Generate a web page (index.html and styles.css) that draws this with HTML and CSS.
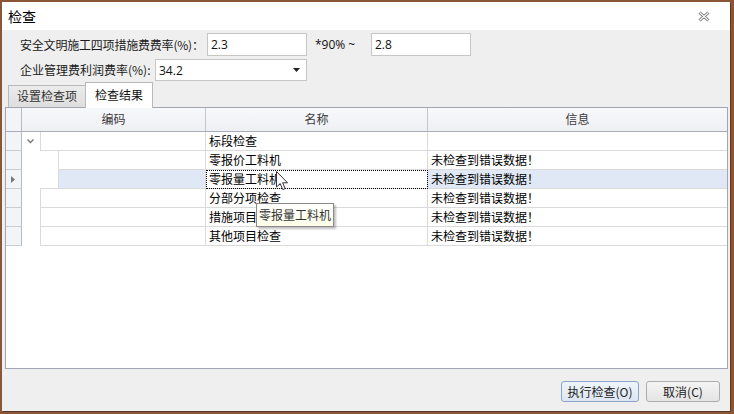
FILE: index.html
```html
<!DOCTYPE html>
<html lang="zh-CN">
  <head>
    <meta charset="utf-8">
    <title>检查</title>
    <link rel="stylesheet" href="styles.css">
  </head>
  <body>

  <div class="window">
    <div class="titlebar">
      <span class="title">检查</span>
      <svg class="close" width="12" height="11" viewBox="0 0 12 11">
        <path d="M1.5 1.5 L10.5 9.5 M10.5 1.5 L1.5 9.5" stroke="#666" stroke-width="3" fill="none"/>
        <path d="M1.5 1.5 L10.5 9.5 M10.5 1.5 L1.5 9.5" stroke="#fff" stroke-width="1.2" fill="none"/>
      </svg>
    </div>

    <div class="content">
      <div class="form">
        <div class="frow">
          <label class="lbl lbl-a">安全文明施工四项措施费费率(%)：</label>
          <div class="txt">2.3</div>
          <span class="mid">*90% ~</span>
          <div class="txt">2.8</div>
        </div>
        <div class="frow">
          <label class="lbl lbl-b">企业管理费利润费率(%):</label>
          <div class="combo">
            <span>34.2</span>
            <svg width="7" height="4" viewBox="0 0 7 4"><path d="M0 0 H7 L3.5 4 Z" fill="#222"/></svg>
          </div>
        </div>
      </div>

      <div class="tabs">
        <span class="tab">设置检查项</span>
        <span class="tab active">检查结果</span>
      </div>

      <div class="grid">
        <div class="row head">
          <div class="ind"></div>
          <div class="hcell code-h">编码</div>
          <div class="hcell name">名称</div>
          <div class="hcell info">信息</div>
        </div>

        <div class="row">
          <div class="ind"></div>
          <div class="coderegion">
            <div class="indent lv1">
              <svg width="7" height="5" viewBox="0 0 7 5"><path d="M0.5 0.5 L3.5 3.5 L6.5 0.5" stroke="#777" stroke-width="1.4" fill="none"/></svg>
            </div>
            <div class="cell code"></div>
          </div>
          <div class="cell name">标段检查</div>
          <div class="cell info"></div>
        </div>

        <div class="row">
          <div class="ind"></div>
          <div class="coderegion">
            <div class="indent lv2"></div>
            <div class="cell code"></div>
          </div>
          <div class="cell name">零报价工料机</div>
          <div class="cell info">未检查到错误数据！</div>
        </div>

        <div class="row selected">
          <div class="ind">
            <svg width="4" height="7" viewBox="0 0 4 7"><path d="M0 0 L4 3.5 L0 7 Z" fill="#777"/></svg>
          </div>
          <div class="coderegion">
            <div class="indent lv2"></div>
            <div class="cell code"></div>
          </div>
          <div class="cell name focus">零报量工料机</div>
          <div class="cell info">未检查到错误数据！</div>
        </div>

        <div class="row">
          <div class="ind"></div>
          <div class="coderegion">
            <div class="indent lv1"></div>
            <div class="cell code step-out"></div>
          </div>
          <div class="cell name">分部分项检查</div>
          <div class="cell info">未检查到错误数据！</div>
        </div>

        <div class="row">
          <div class="ind"></div>
          <div class="coderegion">
            <div class="indent lv1"></div>
            <div class="cell code"></div>
          </div>
          <div class="cell name">措施项目检查</div>
          <div class="cell info">未检查到错误数据！</div>
        </div>

        <div class="row">
          <div class="ind"></div>
          <div class="coderegion">
            <div class="indent lv1"></div>
            <div class="cell code"></div>
          </div>
          <div class="cell name">其他项目检查</div>
          <div class="cell info">未检查到错误数据！</div>
        </div>

        <div class="tooltip">零报量工料机</div>
        <svg class="cursor" width="13" height="20" viewBox="0 0 13 20">
          <path d="M0.5 0.5 L0.5 16 L4.2 12.6 L6.8 18.6 L9.2 17.6 L6.7 11.8 L11.6 11.8 Z" fill="#fff" stroke="#333" stroke-width="1"/>
        </svg>
      </div>

      <div class="footer">
        <button class="btn default">执行检查(O)</button>
        <button class="btn">取消(C)</button>
      </div>
    </div>
  </div>

  </body>
</html>
```

FILE: styles.css
```css
html {
  height: 100%;
}
body {
  margin: 0;
  padding: 2px 4px 3px 2px;
  background: #8b5636;
  font-family: "Noto Sans CJK SC", "Noto Sans", sans-serif;
  font-size: 12px;
  color: #111;
  box-sizing: border-box;
  height: 100%;
}

.window {
  height: 409px;
  width: 728px;
  display: flex;
  flex-direction: column;
  background: #efefef;
  box-shadow: 1px 1px 0 #5a3a26;
}

.titlebar {
  height: 28px;
  background: #fff;
  display: flex;
  align-items: center;
  justify-content: space-between;
  padding: 0 20px 0 6px;
}
.title {
  font-size: 14px;
  line-height: 18px;
  color: #000;
}
.close {
  margin-top: 1px;
}

.content {
  flex: 1;
  display: flex;
  flex-direction: column;
}

/* form */
.form {
  padding: 3px 0 0 18px;
}
.frow {
  display: flex;
  align-items: center;
  margin-bottom: 3px;
}
.frow + .frow {
  margin-bottom: 0;
}
.lbl {
  line-height: 16px;
  color: #1a1a1a;
  white-space: nowrap;
  flex: none;
}
.lbl-a {
  width: 187px;
  letter-spacing: -0.2px;
}
.lbl-b {
  width: 135px;
}
.txt {
  box-sizing: border-box;
  width: 100px;
  height: 23px;
  flex: none;
  background: #fff;
  border: 1px solid #c6c6c6;
  padding: 2px 3px;
  line-height: 17px;
  font-family: "Open Sans", "Noto Sans", sans-serif;
  font-size: 12px;
}
.mid {
  width: 64px;
  padding-left: 8px;
  box-sizing: border-box;
  font-family: "Open Sans", "Noto Sans", sans-serif;
}
.combo {
  box-sizing: border-box;
  width: 152px;
  height: 22px;
  background: #fff;
  border: 1px solid #c6c6c6;
  display: flex;
  align-items: center;
  justify-content: space-between;
  padding: 0 6px 0 3px;
  font-family: "Open Sans", "Noto Sans", sans-serif;
}

/* tabs */
.tabs {
  height: 25px;
  margin-top: 1px;
  display: flex;
  align-items: flex-end;
  padding-left: 6px;
  position: relative;
  z-index: 2;
}
.tab {
  box-sizing: border-box;
  height: 22px;
  width: 78px;
  border: 1px solid #b9b9b9;
  border-bottom: none;
  background: linear-gradient(#ececec, #dedede);
  text-align: center;
  line-height: 20px;
  color: #333;
}
.tab.active {
  height: 26px;
  width: 68px;
  margin-left: -1px;
  margin-bottom: -1px;
  background: #fff;
  color: #111;
  line-height: 24px;
}

/* grid */
.grid {
  position: relative;
  height: 262px;
  box-sizing: border-box;
  margin: 0 2px 0 3px;
  border: 1px solid #a2a6b3;
  background: #fff;
}
.row {
  display: flex;
  height: 19px;
}
.row.head {
  height: 23px;
  background: linear-gradient(#f7f8fa, #eff0f4);
  border-bottom: 1px solid #a9adb9;
}
.ind {
  box-sizing: border-box;
  width: 16px;
  flex: none;
  background: #f3f4f7;
  border-right: 1px solid #b6bac5;
  border-bottom: 1px solid #c9ccd4;
  display: flex;
  align-items: center;
  padding-left: 5px;
}
.head .ind {
  border-bottom: none;
}
.hcell {
  box-sizing: border-box;
  text-align: center;
  line-height: 22px;
  color: #3a3a3a;
  border-right: 1px solid #c3c6cf;
}
.code-h,
.coderegion {
  width: 184px;
  flex: none;
}
.coderegion {
  display: flex;
}
.indent {
  flex: none;
  display: flex;
  align-items: center;
}
.indent.lv1 {
  width: 18px;
  padding-left: 5px;
  box-sizing: border-box;
}
.indent.lv2 {
  width: 36px;
}
.cell {
  box-sizing: border-box;
  border-bottom: 1px solid #dadada;
  line-height: 18px;
  padding-left: 3px;
  white-space: nowrap;
  color: #000;
}
.cell.code {
  flex: 1;
  border-left: 1px solid #dadada;
  border-right: 1px solid #dadada;
}
.cell.step-out {
  box-shadow: 0 -1px 0 #dadada;
}
.name {
  width: 222px;
  flex: none;
}
.cell.name {
  border-right: 1px solid #dadada;
}
.info {
  flex: 1;
}
.hcell.info {
  border-right: none;
}
.selected .cell.code,
.selected .cell.info {
  background: #dfe8f4;
}
.cell.focus {
  outline: 1px dotted #000;
  outline-offset: -1px;
}

.tooltip {
  position: absolute;
  left: 250px;
  top: 95px;
  width: 78px;
  height: 24px;
  box-sizing: border-box;
  background: linear-gradient(#ffffff, #fdfde8);
  border: 1px solid #8a8a8a;
  box-shadow: 2px 2px 2px rgba(0,0,0,0.25);
  padding-left: 2px;
  line-height: 21px;
  color: #333;
}
.cursor {
  position: absolute;
  left: 270px;
  top: 63px;
}

/* footer */
.footer {
  flex: 1;
  display: flex;
  justify-content: flex-end;
  align-items: flex-start;
  padding: 12px 10px 0 0;
  gap: 7px;
}
.btn {
  height: 21px;
  width: 74px;
  padding: 0;
  font-family: "Noto Sans CJK SC", "Noto Sans", sans-serif;
  font-size: 12px;
  color: #222;
  background: linear-gradient(#f4f4f4, #e4e4e4);
  border: 1px solid #adadad;
  border-radius: 3px;
}
.btn.default {
  width: 78px;
  border-color: #8aa5cc;
  background: linear-gradient(#eef4fb, #dde6f1);
}
```
